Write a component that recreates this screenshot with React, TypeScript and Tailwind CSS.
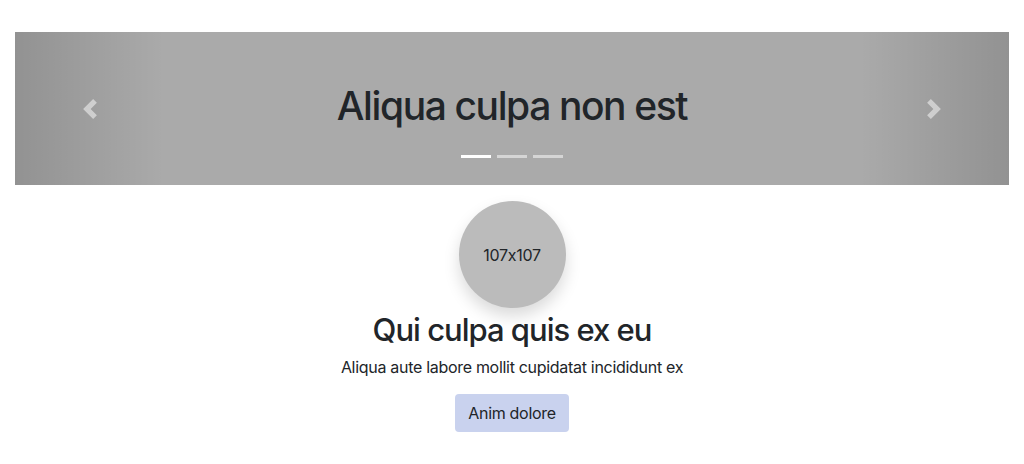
import React from "react";

export default function App() {
  return (
    <div className="w-[1024px] h-[464px] bg-white [font-feature-settings:'calt'_0]" style={{ fontFamily: "Inter, 'Liberation Sans', sans-serif" }}>
      <div className="px-[15px] pt-[32px]">
        <div className="relative h-[153px] bg-[#aaaaaa] flex flex-col items-center">
          <div className="absolute left-0 top-0 bottom-0 w-[15%] bg-gradient-to-r from-[rgba(0,0,0,0.14)] to-transparent flex items-center justify-center">
            <svg width="20" height="20" viewBox="0 0 8 8" fill="#fff" className="opacity-50">
              <path d="M5.25 0l-4 4 4 4 1.5-1.5L4.25 4l2.5-2.5L5.25 0z" />
            </svg>
          </div>
          <div className="absolute right-0 top-0 bottom-0 w-[15%] bg-gradient-to-l from-[rgba(0,0,0,0.14)] to-transparent flex items-center justify-center">
            <svg width="20" height="20" viewBox="0 0 8 8" fill="#fff" className="opacity-50">
              <path d="M2.75 0l-1.5 1.5L3.75 4l-2.5 2.5L2.75 8l4-4-4-4z" />
            </svg>
          </div>
          <h1 className="relative mt-[50px] text-[39px] leading-[48px] tracking-[-1.4px] font-medium text-[#212529]">Aliqua culpa non est</h1>
          <div className="relative mt-[25px] flex gap-[6px]">
            <span className="block w-[30px] h-[3px] bg-white" />
            <span className="block w-[30px] h-[3px] bg-white opacity-50" />
            <span className="block w-[30px] h-[3px] bg-white opacity-50" />
          </div>
        </div>
      </div>
      <div className="flex flex-col items-center pt-[16px]">
        <div className="w-[107px] h-[107px] rounded-full bg-[#bbbbbb] shadow-[0_8px_16px_rgba(0,0,0,0.15)] flex items-center justify-center text-[16px] tracking-[-0.3px] text-[#212529]">
          107x107
        </div>
        <h2 className="mt-[2px] text-[31px] leading-[40px] tracking-[-1px] font-medium text-[#212529]">Qui culpa quis ex eu</h2>
        <p className="mt-[5px] text-[16px] leading-[24px] tracking-[-0.3px] text-[#212529]">Aliqua aute labore mollit cupidatat incididunt ex</p>
        <button className="mt-[15px] h-[38px] px-[13px] rounded-[4px] bg-[#c9d2ee] text-[16px] tracking-[-0.3px] text-[#212529]">Anim dolore</button>
      </div>
    </div>
  );
}
